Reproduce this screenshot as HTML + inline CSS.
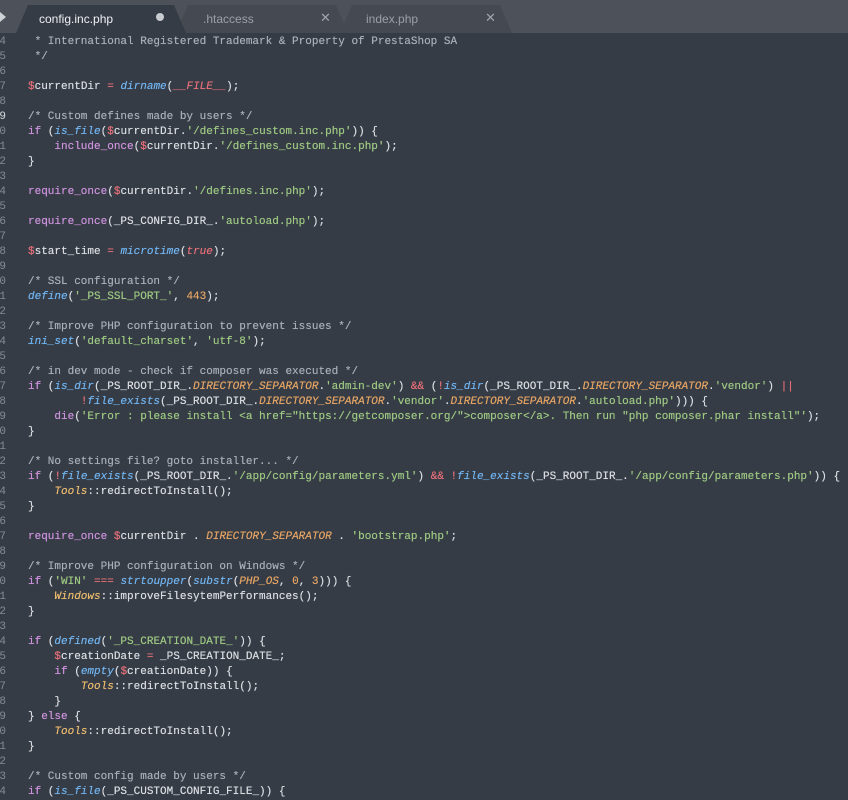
<!DOCTYPE html>
<html><head><meta charset="utf-8"><style>
html,body{margin:0;padding:0;width:848px;height:792px;overflow:hidden;background:#363c46;}
.bar{position:absolute;left:0;top:0;width:848px;height:33px;background:#4d525a;}
.tab{position:absolute;top:5px;height:28px;font:12px "Liberation Sans",sans-serif;}
.tab svg{position:absolute;left:0;top:0}
.tab span{position:absolute;top:7px}
.code{position:absolute;left:0;top:35px;font:11px/15px "Liberation Mono",monospace;color:#dadde2;white-space:pre;text-shadow:0 0 0.4px currentColor;}
.ln{position:absolute;left:-6px;top:35px;font:11px/15px "Liberation Mono",monospace;color:#858c96;white-space:pre;text-align:right;width:12px}
.code div{padding-left:28px;height:15px}
.c{color:#a8aeb6}.k{color:#cc92dc}.f{color:#70b4f0;font-style:italic}.s{color:#9dc882}
.n{color:#e4a464;font-style:italic}.r{color:#e46f78}.o{color:#e46f78}.y{color:#eabb6c;font-style:italic}
.num{color:#e4a464}
</style></head><body>
<div class="bar"></div>
<div style="position:absolute;left:0;top:12px;width:0;height:0;border-left:6px solid #cfd2d6;border-top:5px solid transparent;border-bottom:5px solid transparent"></div>
<div class="tab" style="left:340px;width:172px"><svg width="172" height="28"><path d="M0 28 L12 0 L160 0 L172 28 Z" fill="#454a52"/></svg><span style="left:26px;color:#9ba0a7">index.php</span><span style="left:145px;color:#a0a5ac;font-size:13px;top:5px">✕</span></div>
<div class="tab" style="left:176px;width:172px"><svg width="172" height="28"><path d="M0 28 L12 0 L160 0 L172 28 Z" fill="#454a52"/></svg><span style="left:27px;color:#9ba0a7">.htaccess</span><span style="left:144px;color:#a0a5ac;font-size:13px;top:5px">✕</span></div>
<div class="tab" style="left:16px;width:170px"><svg width="170" height="28"><path d="M0 28 L12 0 L158 0 L170 28 Z" fill="#363c46"/></svg><span style="left:23px;color:#eef0f2">config.inc.php</span><span style="left:140px;top:8px;width:8px;height:8px;border-radius:50%;background:#c8ccd1"></span></div>
<div class="ln">4
5
6
7
8
<span style="color:#d8dbe0">9</span>
0
1
2
3
4
5
6
7
8
9
0
1
2
3
4
5
6
7
8
9
0
1
2
3
4
5
6
7
8
9
0
1
2
3
4
5
6
7
8
9
0
1
2
3
4</div>
<div class="code"><div class="c"> * International Registered Trademark &amp; Property of PrestaShop SA</div><div class="c"> */</div><div></div><div><span class="r">$</span>currentDir <span class="o">=</span> <span class="f">dirname</span>(<span class="n" style="color:#e46f78">__FILE__</span>);</div><div></div><div class="c">/* Custom defines made by users */</div><div><span class="k">if</span> (<span class="f">is_file</span>(<span class="r">$</span>currentDir.<span class="s">'/defines_custom.inc.php'</span>)) {</div><div>    <span class="k">include_once</span>(<span class="r">$</span>currentDir.<span class="s">'/defines_custom.inc.php'</span>);</div><div>}</div><div></div><div><span class="k">require_once</span>(<span class="r">$</span>currentDir.<span class="s">'/defines.inc.php'</span>);</div><div></div><div><span class="k">require_once</span>(_PS_CONFIG_DIR_.<span class="s">'autoload.php'</span>);</div><div></div><div><span class="r">$</span>start_time <span class="o">=</span> <span class="f">microtime</span>(<span class="n" style="color:#e46f78">true</span>);</div><div></div><div class="c">/* SSL configuration */</div><div><span class="f">define</span>(<span class="s">'_PS_SSL_PORT_'</span>, <span class="num">443</span>);</div><div></div><div class="c">/* Improve PHP configuration to prevent issues */</div><div><span class="f">ini_set</span>(<span class="s">'default_charset'</span>, <span class="s">'utf-8'</span>);</div><div></div><div class="c">/* in dev mode - check if composer was executed */</div><div><span class="k">if</span> (<span class="f">is_dir</span>(_PS_ROOT_DIR_.<span class="n">DIRECTORY_SEPARATOR</span>.<span class="s">'admin-dev'</span>) <span class="o">&amp;&amp;</span> (<span class="o">!</span><span class="f">is_dir</span>(_PS_ROOT_DIR_.<span class="n">DIRECTORY_SEPARATOR</span>.<span class="s">'vendor'</span>) <span class="o">||</span></div><div>        <span class="o">!</span><span class="f">file_exists</span>(_PS_ROOT_DIR_.<span class="n">DIRECTORY_SEPARATOR</span>.<span class="s">'vendor'</span>.<span class="n">DIRECTORY_SEPARATOR</span>.<span class="s">'autoload.php'</span>))) {</div><div>    <span class="k">die</span>(<span class="s">'Error : please install &lt;a href="https://getcomposer.org/"&gt;composer&lt;/a&gt;. Then run "php composer.phar install"'</span>);</div><div>}</div><div></div><div class="c">/* No settings file? goto installer... */</div><div><span class="k">if</span> (<span class="o">!</span><span class="f">file_exists</span>(_PS_ROOT_DIR_.<span class="s">'/app/config/parameters.yml'</span>) <span class="o">&amp;&amp;</span> <span class="o">!</span><span class="f">file_exists</span>(_PS_ROOT_DIR_.<span class="s">'/app/config/parameters.php'</span>)) {</div><div>    <span class="y">Tools</span>::redirectToInstall();</div><div>}</div><div></div><div><span class="k">require_once</span> <span class="r">$</span>currentDir . <span class="n">DIRECTORY_SEPARATOR</span> . <span class="s">'bootstrap.php'</span>;</div><div></div><div class="c">/* Improve PHP configuration on Windows */</div><div><span class="k">if</span> (<span class="s">'WIN'</span> <span class="o">===</span> <span class="f">strtoupper</span>(<span class="f">substr</span>(<span class="n">PHP_OS</span>, <span class="num">0</span>, <span class="num">3</span>))) {</div><div>    <span class="y">Windows</span>::improveFilesytemPerformances();</div><div>}</div><div></div><div><span class="k">if</span> (<span class="f">defined</span>(<span class="s">'_PS_CREATION_DATE_'</span>)) {</div><div>    <span class="r">$</span>creationDate <span class="o">=</span> _PS_CREATION_DATE_;</div><div>    <span class="k">if</span> (<span class="f">empty</span>(<span class="r">$</span>creationDate)) {</div><div>        <span class="y">Tools</span>::redirectToInstall();</div><div>    }</div><div>} <span class="k">else</span> {</div><div>    <span class="y">Tools</span>::redirectToInstall();</div><div>}</div><div></div><div class="c">/* Custom config made by users */</div><div><span class="k">if</span> (<span class="f">is_file</span>(_PS_CUSTOM_CONFIG_FILE_)) {</div></div>
</body></html>
